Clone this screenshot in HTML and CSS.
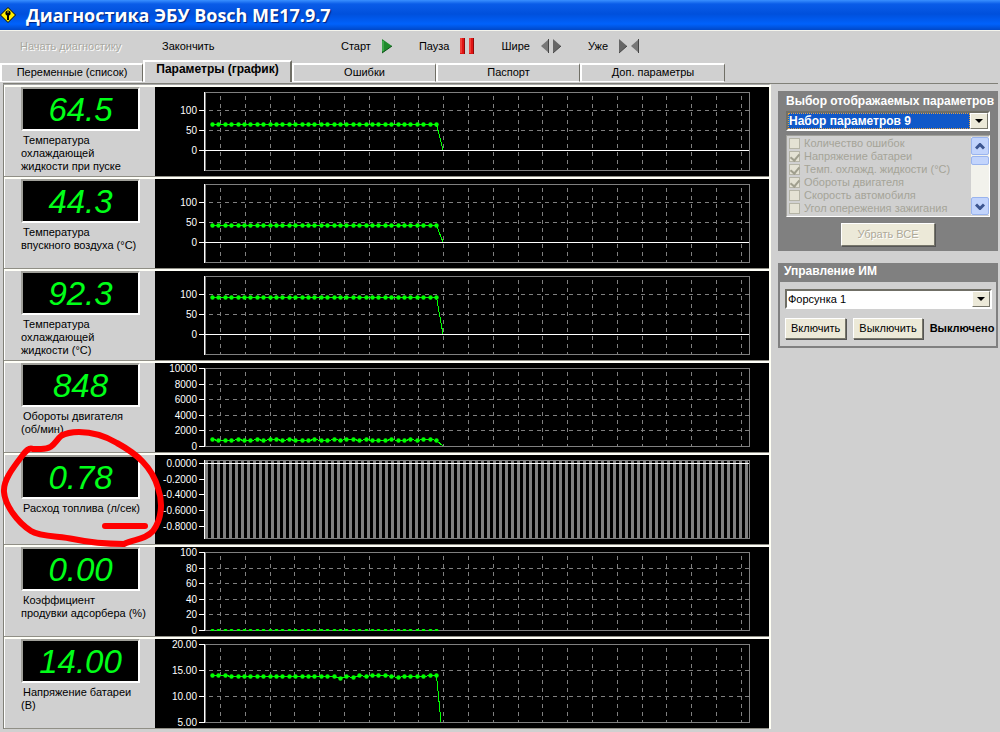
FILE: index.html
```html
<!DOCTYPE html>
<html lang="ru">
<head>
<meta charset="UTF-8" />
<title>Диагностика ЭБУ Bosch ME17.9.7</title>
<link rel="stylesheet" href="styles.css">
</head>
<body>

<header class="titlebar">
  <svg class="logo" width="16" height="16" viewBox="0 0 16 16">
    <path d="M8 0.5 L15.5 8 L8 15.5 L0.5 8 Z" fill="#ffee00" stroke="#000"/>
    <circle cx="8" cy="6" r="2.6" fill="#000"/>
    <circle cx="8" cy="5" r="0.8" fill="#ffee00"/>
    <path d="M8 7 V13" stroke="#000" stroke-width="2"/>
  </svg>
  <h1>Диагностика ЭБУ Bosch ME17.9.7</h1>
</header>

<div class="toolbar">
  <button class="tool tool-begin" disabled>Начать диагностику</button>
  <button class="tool tool-end">Закончить</button>
  <button class="tool">Старт
    <svg width="12" height="16" viewBox="0 0 12 16"><path d="M1 1 L11 8 L1 15 Z" fill="#1f8a2c"/><path d="M1 15 L11 8" stroke="#0d5218"/><path d="M2 3 V13" stroke="#5dc06a"/></svg>
  </button>
  <button class="tool">Пауза
    <svg width="16" height="16" viewBox="0 0 16 16"><path d="M1 0h5v16h-5zM10 0h5v16h-5z" fill="#e01414"/><path d="M2 0v15M11 0v15" stroke="#ff6a5a"/><path d="M5.5 0v16M14.5 0v16" stroke="#8c0a0a"/></svg>
  </button>
  <button class="tool">Шире
    <svg width="22" height="16" viewBox="0 0 22 16"><path d="M9 1 V15 L1 8 Z" fill="#777"/><path d="M13 1 V15 L21 8 Z" fill="#666"/><path d="M8.5 1V15M13 15L21 8" stroke="#444"/></svg>
  </button>
  <button class="tool">Уже
    <svg width="22" height="16" viewBox="0 0 22 16"><path d="M1 1 V15 L9 8 Z" fill="#666"/><path d="M21 1 V15 L13 8 Z" fill="#777"/><path d="M1 15L9 8M20.5 1V15" stroke="#444"/></svg>
  </button>
</div>

<nav class="tabs">
  <button class="tab">Переменные (список)</button>
  <button class="tab active">Параметры (график)</button>
  <button class="tab">Ошибки</button>
  <button class="tab">Паспорт</button>
  <button class="tab">Доп. параметры</button>
</nav>

<main class="workspace">
  <section class="rows">
    <div class="row">
      <div class="info"><output class="led">64.5</output><p class="name">Температура<br>охлаждающей<br>жидкости при пуске</p></div>
      <div class="chart" data-chart="start"></div>
    </div>
    <div class="row">
      <div class="info"><output class="led">44.3</output><p class="name">Температура<br>впускного воздуха (°C)</p></div>
      <div class="chart" data-chart="air"></div>
    </div>
    <div class="row">
      <div class="info"><output class="led">92.3</output><p class="name">Температура<br>охлаждающей<br>жидкости (°C)</p></div>
      <div class="chart" data-chart="coolant"></div>
    </div>
    <div class="row">
      <div class="info"><output class="led">848</output><p class="name">Обороты двигателя<br>(об/мин)</p></div>
      <div class="chart" data-chart="rpm"></div>
    </div>
    <div class="row">
      <div class="info"><output class="led">0.78</output><p class="name">Расход топлива (л/сек)</p></div>
      <div class="chart" data-chart="fuel"></div>
      <svg class="mark" width="170" height="124" viewBox="0 0 170 124">
        <path d="M62 8 C54 15 54 22 41 22 L33 22 C29 20 26 24 22 29 C12 42 3 54 4 65 C5 78 17 95 31 104 C40 110 60 109 73 112 C92 116 105 117 124 117 C134 112 145 113 153 104 C162 92 163 75 158 61 C152 40 137 27 117 16 C102 7 88 5 79 5 C71 5 66 6 61 9"/>
        <path d="M105 99 H145"/>
      </svg>
    </div>
    <div class="row">
      <div class="info"><output class="led">0.00</output><p class="name">Коэффициент<br>продувки адсорбера (%)</p></div>
      <div class="chart" data-chart="purge"></div>
    </div>
    <div class="row">
      <div class="info"><output class="led">14.00</output><p class="name">Напряжение батареи<br>(В)</p></div>
      <div class="chart" data-chart="battery"></div>
    </div>
  </section>

  <aside class="side">
    <section class="box choice">
      <label class="box-title" for="preset">Выбор отображаемых параметров</label>
      <div class="combo selected">
        <select id="preset"><option>Набор параметров 9</option></select>
        <span class="arrow"></span>
      </div>
      <div class="list">
        <div class="items">
          <label><input type="checkbox" disabled>Количество ошибок</label>
          <label><input type="checkbox" disabled checked>Напряжение батареи</label>
          <label><input type="checkbox" disabled checked>Темп. охлажд. жидкости (°C)</label>
          <label><input type="checkbox" disabled checked>Обороты двигателя</label>
          <label><input type="checkbox" disabled>Скорость автомобиля</label>
          <label><input type="checkbox" disabled>Угол опережения зажигания</label>
        </div>
        <div class="scroll">
          <span class="scroll-btn"><svg width="10" height="7" viewBox="0 0 10 7"><path d="M1 5.5 L5 1.5 L9 5.5"/></svg></span>
          <span class="thumb"></span>
          <span class="scroll-btn last"><svg width="10" height="7" viewBox="0 0 10 7"><path d="M1 1.5 L5 5.5 L9 1.5"/></svg></span>
        </div>
      </div>
      <button class="btn wide" disabled>Убрать ВСЕ</button>
    </section>

    <section class="box control">
      <label class="box-title" for="device">Управление ИМ</label>
      <div class="control-body">
        <div class="combo">
          <select id="device"><option>Форсунка 1</option></select>
          <span class="arrow"></span>
        </div>
        <div class="actions">
          <button class="btn">Включить</button>
          <button class="btn">Выключить</button>
          <span class="state">Выключено</span>
        </div>
      </div>
    </section>
  </aside>
</main>

<script src="script.js"></script>
</body>
</html>
```
FILE: styles.css
```css
* {
  box-sizing: border-box;
}
body {
  margin: 0;
  background: #d0d0d0;
  color: #000;
  font-family: "Liberation Sans", Arial, sans-serif;
  font-size: 11px;
  line-height: 13px;
  overflow: hidden;
}
button, select {
  font: inherit;
  color: inherit;
}

/* Title */
.titlebar {
  display: flex;
  align-items: center;
  gap: 10px;
  height: 30px;
  background: linear-gradient(#3a90ff 0, #0a5ce8 4px, #0050dc 14px, #0062fc 24px, #0048c8 30px);
}
.titlebar h1 {
  margin: 0;
  font-family: "Open Sans", "Noto Sans", sans-serif;
  font-size: 18px;
  line-height: 28px;
  color: #fff;
  text-shadow: 1px 1px 1px #00207a;
}

/* Toolbar */
.toolbar {
  display: flex;
  align-items: center;
  gap: 26px;
  height: 30px;
  padding: 1px 0 0 20px;
  border-top: 1px solid #f4f4ec;
}
.tool {
  display: flex;
  align-items: center;
  gap: 10px;
  padding: 0;
  border: 0;
  background: none;
}
.tool:disabled {
  color: #a8a8a0;
  text-shadow: 1px 1px 0 #fff;
}
.tool-begin {
  width: 116px;
}
.tool-end {
  width: 153px;
}

/* Tabs */
.tabs {
  display: grid;
  grid-template-columns: 143px 149px 144px 144px 145px;
  align-items: end;
  height: 23px;
}
.tab {
  height: 19px;
  margin-bottom: 3px;
  padding: 0 0 2px;
  border: 0;
  border-top: 2px solid #fff;
  border-left: 2px solid #fff;
  border-right: 1px solid #706f66;
  border-bottom: 1px solid #fff;
  background: none;
}
.tab.active {
  height: 22px;
  padding-bottom: 6px;
  border-right: 2px solid #706f66;
  border-bottom: 0;
  font-size: 12px;
  font-weight: bold;
}

.workspace {
  display: grid;
  grid-template-columns: minmax(0, 1fr) 220px;
  gap: 7px;
  margin: 0 2px 0 3px;
  border-top: 1px solid #808078;
}

/* Parameter rows */
.rows {
  border-top: 1px solid #aaa;
  border-left: 1px solid #808078;
  border-right: 2px solid #fffff4;
}
.row {
  position: relative;
  display: grid;
  grid-template-columns: 151px minmax(0, 1fr);
  height: 92px;
  border-top: 2px solid #fffff8;
  border-bottom: 1px solid #908f86;
}
.info {
  padding: 0 8px 0 16px;
  border-left: 1px solid #fff;
}
.led {
  display: block;
  width: 119px;
  height: 44px;
  border: 2px solid #fff;
  border-top-color: #a0a09a;
  border-left-color: #a0a09a;
  background: #000;
  color: #00ff18;
  font-size: 33px;
  font-style: italic;
  line-height: 41px;
  text-align: center;
}
.name {
  margin: 3px 0 0;
  text-indent: 2px;
  white-space: nowrap;
}
.chart {
  background: #000;
}
.chart svg {
  display: block;
}
.axis-text {
  fill: #fff;
  font-size: 10px;
  text-anchor: end;
}
.frame, .grid {
  fill: none;
  stroke: #808080;
}
.grid {
  stroke-dasharray: 4 4;
}
.axis {
  fill: none;
  stroke: #fff;
}
.bar {
  fill: #808080;
}
.line {
  fill: none;
  stroke: #00ff00;
  shape-rendering: crispEdges;
}
.dot {
  fill: #00ff00;
}
.mark {
  position: absolute;
  left: -4px;
  top: -28px;
  z-index: 2;
  fill: none;
  stroke: #ff0000;
  stroke-width: 6;
  stroke-linecap: round;
  stroke-linejoin: round;
}

/* Right side */
.side {
  display: flex;
  flex-direction: column;
  gap: 12px;
  padding-top: 7px;
}
.box {
  background: #808080;
}
.box-title {
  display: block;
  font-size: 12px;
  font-weight: bold;
  color: #fff;
  white-space: nowrap;
}
.choice {
  display: flex;
  flex-direction: column;
  height: 160px;
  padding: 4px 8px;
}
.choice .box-title {
  margin-bottom: 3px;
}
.combo {
  display: flex;
  height: 20px;
  border: 2px solid #fff;
  border-top-color: #706f66;
  border-left-color: #706f66;
  background: #fff;
}
.combo select {
  flex: 1;
  min-width: 0;
  padding: 0 1px;
  border: 0;
  border-radius: 0;
  background: #fff;
  appearance: none;
}
.selected select {
  outline: 1px dotted #e0a040;
  outline-offset: -1px;
  background: #1058c8;
  color: #fff;
  font-size: 12px;
  font-weight: bold;
}
.arrow {
  display: flex;
  align-items: center;
  justify-content: center;
  width: 18px;
  border: 1px solid #77766a;
  border-top-color: #fff;
  border-left-color: #fff;
  background: #ece9d8;
}
.arrow::after {
  content: "";
  border: 4px solid transparent;
  border-top-color: #000;
  border-bottom: 0;
}
.list {
  display: flex;
  justify-content: space-between;
  height: 82px;
  margin-top: 4px;
  padding: 1px 0;
  border: 1px solid #fff;
  border-top-color: #a0a09a;
  border-left-color: #a0a09a;
  background: #d0d0d0;
  color: #a5a498;
  overflow: hidden;
}
.items label {
  display: flex;
  align-items: center;
  gap: 4px;
  height: 13px;
  padding-left: 2px;
  white-space: nowrap;
}
.items input {
  width: 11px;
  height: 11px;
  margin: 0;
  border: 1px solid #b5b4a6;
  background: #e4e2d4;
  appearance: none;
}
.items input:checked::after {
  content: "";
  display: block;
  width: 4px;
  height: 7px;
  margin-left: 2px;
  border: solid #a09f8e;
  border-width: 0 2px 2px 0;
  transform: rotate(40deg);
}
.scroll {
  display: flex;
  flex-direction: column;
  width: 18px;
  background: #f2f2ec;
}
.scroll-btn, .thumb {
  display: flex;
  align-items: center;
  justify-content: center;
  height: 18px;
  border: 1px solid #9ab4ee;
  border-radius: 2px;
  background: #c2d4fc;
}
.scroll-btn path {
  fill: none;
  stroke: #3c5590;
  stroke-width: 3;
}
.scroll-btn.last {
  margin-top: auto;
}
.thumb {
  height: 9px;
  margin-top: 1px;
}
.btn {
  height: 21px;
  padding: 0 5px;
  border: 1px solid #77766a;
  border-top-color: #fff;
  border-left-color: #fff;
  background: #ece9d8;
  box-shadow: 1px 1px 0 #555;
  white-space: nowrap;
}
.btn:disabled {
  color: #aca899;
  text-shadow: 1px 1px 0 #fff;
}
.btn.wide {
  align-self: center;
  width: 94px;
  height: 23px;
  margin-top: 6px;
}
.control {
  border: 2px solid #808080;
}
.control .box-title {
  height: 17px;
  padding-left: 4px;
}
.control-body {
  height: 64px;
  padding: 7px 4px 0 5px;
  background: #d0d0d0;
}
.actions {
  display: flex;
  align-items: center;
  gap: 7px;
  height: 24px;
  margin-top: 7px;
}
.state {
  font-weight: bold;
}
```
FILE: script.js
```js
const LEFT = 50;
const RIGHT = 594;
const TOP = 5;
const BOTTOM = 83;
const COUNT = 36;

const temp = [['100', 23], ['50', 43], ['0', 63]];

// y positions are inside the plot, zero is the white base line
const charts = {
  start: { ticks: temp, zero: 63, y: [37], end: [288, 63] },
  air: { ticks: temp, zero: 63, y: [46], end: [288, 63] },
  coolant: { ticks: temp, zero: 63, y: [26], end: [288, 63] },
  rpm: {
    ticks: [['10000', 5], ['8000', 21], ['6000', 36], ['4000', 52], ['2000', 67], ['0', 83]],
    y: [76, 77, 77, 77, 76, 77, 77, 76, 77, 76, 76, 77], end: [288, 83]
  },
  fuel: {
    ticks: [['0.0000', 8], ['-0.2000', 24], ['-0.4000', 39], ['-0.6000', 55], ['-0.8000', 71]],
    zero: 8, bars: true
  },
  purge: {
    ticks: [['100', 5], ['80', 21], ['60', 36], ['40', 52], ['20', 67], ['0', 83]],
    y: [83]
  },
  battery: {
    ticks: [['20.00', 5], ['15.00', 31], ['10.00', 57], ['5.00', 83]],
    y: [36, 36, 36, 37, 37, 37, 37, 37, 37, 37, 37, 37, 37, 37, 37, 37, 37, 37, 37, 37, 39, 37, 38, 36, 37, 36, 36, 36, 37, 38, 37, 37, 37, 37, 36, 36],
    end: [286, 83]
  }
};

function line(cls, x1, y1, x2, y2) {
  return `<path class="${cls}" d="M${x1} ${y1} L${x2} ${y2}"/>`;
}

function draw(c) {
  let s = '';
  if (c.bars) {
    for (let x = LEFT; x < RIGHT - 2; x += 6) {
      s += `<rect class="bar" x="${x}" y="${TOP}" width="3" height="${BOTTOM - TOP}"/>`;
    }
  } else {
    for (let i = 0; i < 22; i++) {
      const x = Math.round(65 + i * 24.8) + 0.5;
      s += line('grid', x, TOP + 4, x, BOTTOM);
    }
    c.ticks.forEach(([, y]) => {
      if (y > TOP && y < BOTTOM) s += line('grid', LEFT + 4, y + 0.5, RIGHT, y + 0.5);
    });
  }
  s += `<rect class="frame" x="${LEFT}.5" y="${TOP}.5" width="${RIGHT - LEFT}" height="${BOTTOM - TOP}"/>`;
  s += line('axis', LEFT - 0.5, TOP, LEFT - 0.5, BOTTOM + 1);
  if (c.zero) s += line('axis', LEFT, c.zero + 0.5, RIGHT, c.zero + 0.5);
  c.ticks.forEach(([text, y]) => {
    s += line('axis', LEFT - 6, y + 0.5, LEFT, y + 0.5);
    s += `<text class="axis-text" x="${LEFT - 8}" y="${y + 4}">${text}</text>`;
  });
  if (c.y) {
    const points = [];
    for (let i = 0; i < COUNT; i++) {
      points.push([Math.round(57 + i * 6.4) + 0.5, c.y[i % c.y.length] + 0.5]);
    }
    points.forEach(([x, y]) => {
      s += y > BOTTOM
        ? `<path class="dot" d="M${x - 2} ${BOTTOM + 1}v-1l1 -1h2l1 1v1z"/>`
        : `<circle class="dot" cx="${x}" cy="${y}" r="2.2"/>`;
    });
    if (c.end) {
      points.push([c.end[0], c.end[1]]);
      s += `<polyline class="line" points="${points.join(' ')}"/>`;
    }
  }
  return `<svg width="614" height="89">${s}</svg>`;
}

document.querySelectorAll('.chart').forEach(el => {
  el.innerHTML = draw(charts[el.dataset.chart]);
});
```
